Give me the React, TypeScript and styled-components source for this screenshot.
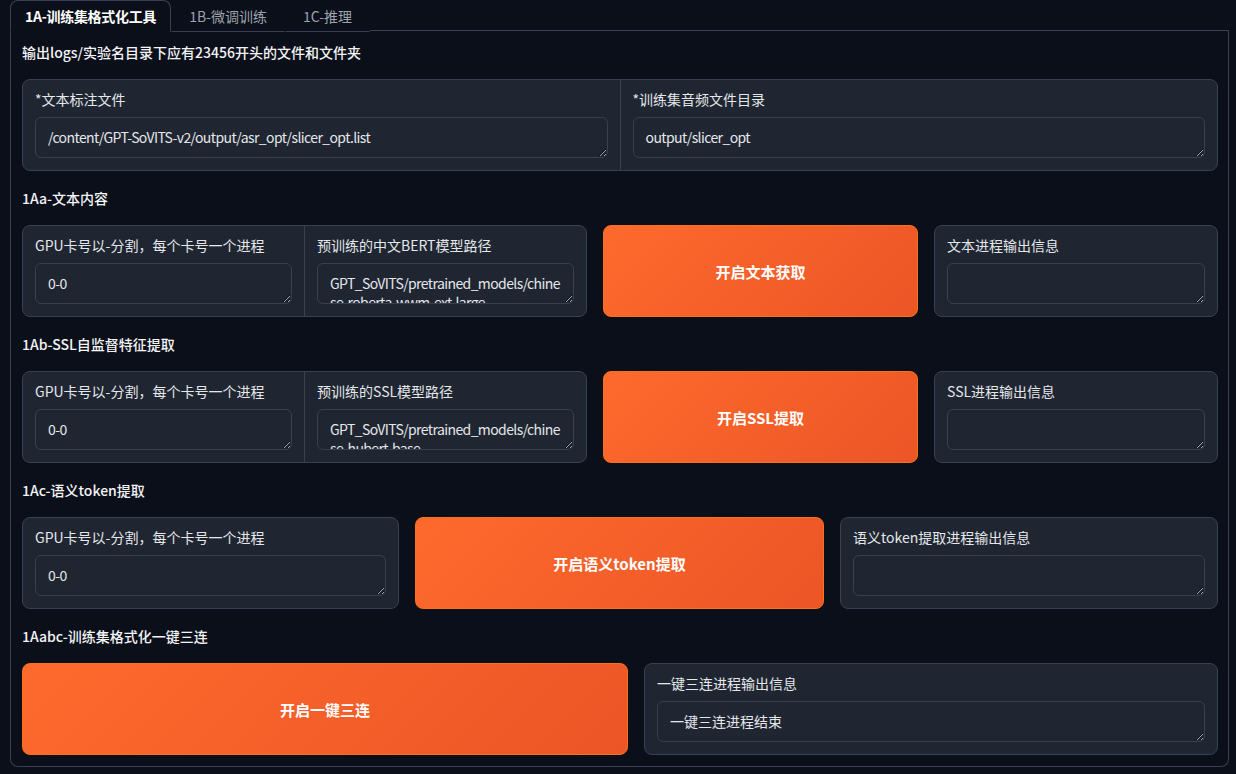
import React from 'react'
import styled, {createGlobalStyle} from 'styled-components'

// -------------------------------------------------------------
// Theme.
// -------------------------------------------------------------

const colors = {
  page: '#0b0f19',
  block: '#1f2631',
  border: '#374151',
  text: '#e5e7eb',
  muted: '#9ca3af',
  orange: '#fe6a2d',
  orangeDark: '#ec5526'
}

const GlobalStyle = createGlobalStyle`
  html, body {
    margin: 0;
    padding: 0;
    background: ${colors.page};
  }

  body {
    color: ${colors.text};
    font-family: "Noto Sans CJK SC", "Noto Sans", sans-serif;
    font-size: 14px;
  }

  * {
    box-sizing: border-box;
  }
`

// -------------------------------------------------------------
// Components.
// -------------------------------------------------------------

const Page = styled.div`
  padding: 0 7px 6px 10px;
`

const TabBar = styled.div`
  display: flex;
  height: 31px;
`

const Tab = styled.div<{$active?: boolean}>`
  display: flex;
  align-items: center;

  padding: 0 ${p => (p.$active ? 14 : 17)}px;
  margin-bottom: -1px;

  color: ${p => (p.$active ? '#ffffff' : colors.muted)};
  background: ${colors.page};
  border: 1px solid ${p => (p.$active ? colors.border : 'transparent')};
  border-bottom-color: ${p => (p.$active ? colors.page : colors.border)};
  border-radius: 8px 8px 0 0;

  font-size: 14px;
  font-weight: ${p => (p.$active ? 600 : 400)};
  letter-spacing: ${p => (p.$active ? '-0.3px' : '0')};
  position: relative;
  z-index: 1;
`

const TabFill = styled.div`
  flex: 1;
  border-bottom: 1px solid ${colors.border};
`

const Panel = styled.div`
  display: flex;
  flex-direction: column;
  gap: 16px;

  padding: 10px 10px 11px 11px;

  border: 1px solid ${colors.border};
  border-top: none;
  border-radius: 0 0 8px 8px;
`

const Note = styled.div`
  line-height: 22px;
  font-size: 14px;
  font-weight: 500;
  color: #f3f4f6;
`

const Row = styled.div<{$cols: string}>`
  display: grid;
  grid-template-columns: ${p => p.$cols};
  grid-template-rows: 92px;
  gap: 16px;
`

const Group = styled.div`
  display: flex;
  min-width: 0;

  background: ${colors.block};
  border: 1px solid ${colors.border};
  border-radius: 8px;
  overflow: hidden;
`

const Field = styled.div<{$boxed?: boolean}>`
  flex: 1;
  display: flex;
  flex-direction: column;
  min-width: 0;

  padding: 9px 12px 12px;

  & + & {
    border-left: 1px solid ${colors.border};
  }

  ${p =>
    p.$boxed &&
    `
    background: ${colors.block};
    border: 1px solid ${colors.border};
    border-radius: 8px;
  `}
`

const Label = styled.span`
  line-height: 20px;
  margin-bottom: 8px;
  font-size: 14px;
  color: ${colors.text};
  white-space: nowrap;
`

const Input = styled.textarea<{$latin?: boolean}>`
  display: block;
  width: 100%;
  height: 41px;

  padding: 10px 12px 9px;

  color: ${colors.text};
  background: ${colors.block};
  border: 1px solid ${colors.border};
  border-radius: 6px;
  outline: none;

  font-family: inherit;
  font-size: 14px;
  line-height: 19px;
  letter-spacing: ${p => (p.$latin ? '-0.6px' : '0')};
  word-break: break-all;
  resize: vertical;
  overflow: hidden;
`

const Button = styled.button`
  display: flex;
  align-items: center;
  justify-content: center;

  color: #ffffff;
  background: linear-gradient(135deg, ${colors.orange}, ${colors.orangeDark});
  border: 1px solid #f97316;
  border-radius: 8px;

  font-family: inherit;
  font-size: 15px;
  font-weight: 700;
  cursor: pointer;
`

const TextField = (props: {label: string; value?: string; boxed?: boolean}) => {
  const value = props.value || ''
  const latin = /^[\x00-\x7f]+$/.test(value)

  return (
    <Field $boxed={props.boxed}>
      <Label>{props.label}</Label>
      <Input readOnly rows={1} $latin={latin} value={value} />
    </Field>
  )
}

// -------------------------------------------------------------
// Export.
// -------------------------------------------------------------

const gpuLabel = 'GPU卡号以-分割，每个卡号一个进程'

export default () => (
  <Page>
    <GlobalStyle />
    <TabBar>
      <Tab $active>1A-训练集格式化工具</Tab>
      <Tab>1B-微调训练</Tab>
      <Tab>1C-推理</Tab>
      <TabFill />
    </TabBar>
    <Panel>
      <Note>输出logs/实验名目录下应有23456开头的文件和文件夹</Note>

      <Row $cols="1fr">
        <Group>
          <TextField
            label="*文本标注文件"
            value="/content/GPT-SoVITS-v2/output/asr_opt/slicer_opt.list"
          />
          <TextField label="*训练集音频文件目录" value="output/slicer_opt" />
        </Group>
      </Row>

      <Note>1Aa-文本内容</Note>
      <Row $cols="565fr 315fr 284fr">
        <Group>
          <TextField label={gpuLabel} value="0-0" />
          <TextField
            label="预训练的中文BERT模型路径"
            value="GPT_SoVITS/pretrained_models/chinese-roberta-wwm-ext-large"
          />
        </Group>
        <Button>开启文本获取</Button>
        <TextField boxed label="文本进程输出信息" />
      </Row>

      <Note>1Ab-SSL自监督特征提取</Note>
      <Row $cols="565fr 315fr 284fr">
        <Group>
          <TextField label={gpuLabel} value="0-0" />
          <TextField
            label="预训练的SSL模型路径"
            value="GPT_SoVITS/pretrained_models/chinese-hubert-base"
          />
        </Group>
        <Button>开启SSL提取</Button>
        <TextField boxed label="SSL进程输出信息" />
      </Row>

      <Note>1Ac-语义token提取</Note>
      <Row $cols="377fr 409fr 378fr">
        <TextField boxed label={gpuLabel} value="0-0" />
        <Button>开启语义token提取</Button>
        <TextField boxed label="语义token提取进程输出信息" />
      </Row>

      <Note>1Aabc-训练集格式化一键三连</Note>
      <Row $cols="606fr 574fr">
        <Button>开启一键三连</Button>
        <TextField boxed label="一键三连进程输出信息" value="一键三连进程结束" />
      </Row>
    </Panel>
  </Page>
)
